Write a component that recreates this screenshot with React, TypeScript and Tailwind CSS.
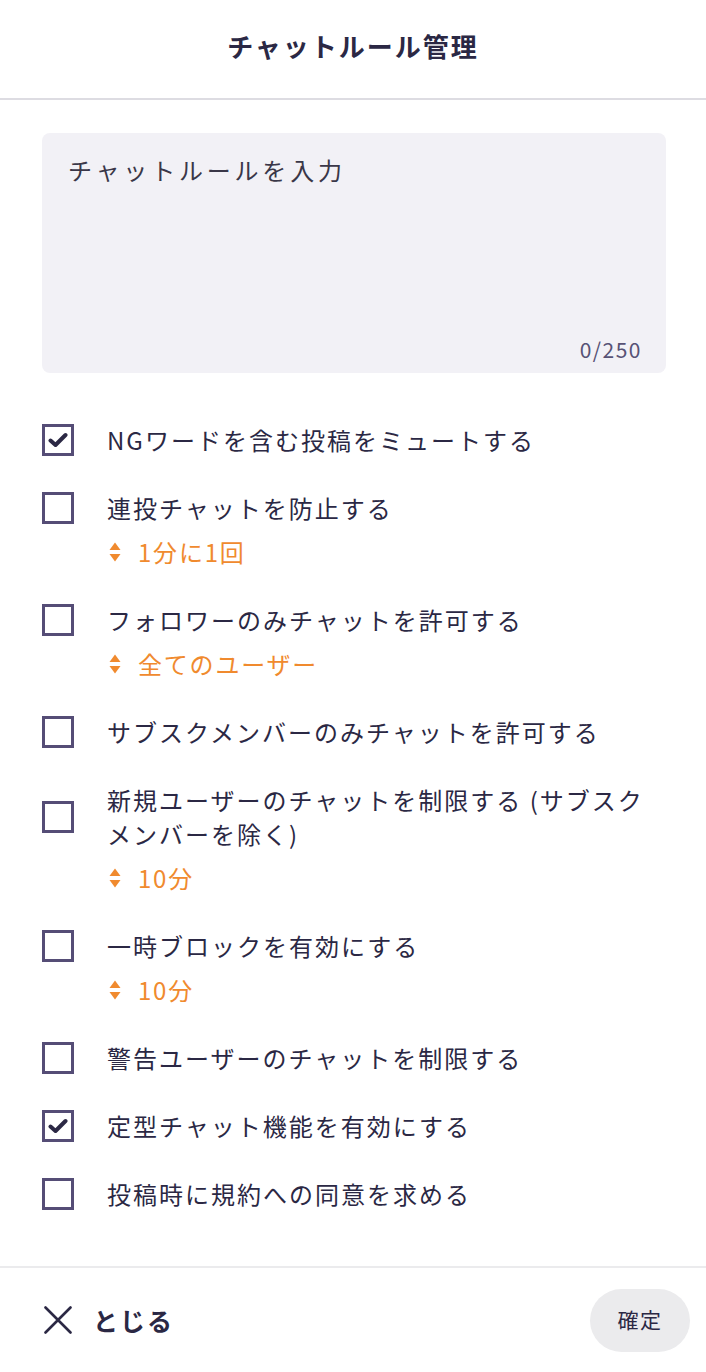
import React from "react";

const FONT = { fontFamily: '"Noto Sans CJK JP", "Noto Sans", sans-serif' };

type Item = { label: React.ReactNode; checked?: boolean; sub?: string };

const items: Item[] = [
  { label: "NGワードを含む投稿をミュートする", checked: true },
  { label: "連投チャットを防止する", sub: "1分に1回" },
  { label: "フォロワーのみチャットを許可する", sub: "全てのユーザー" },
  { label: "サブスクメンバーのみチャットを許可する" },
  { label: "新規ユーザーのチャットを制限する (サブスクメンバーを除く)", sub: "10分" },
  { label: "一時ブロックを有効にする", sub: "10分" },
  { label: "警告ユーザーのチャットを制限する" },
  { label: "定型チャット機能を有効にする", checked: true },
  { label: "投稿時に規約への同意を求める" },
];

function Checkbox({ checked }: { checked?: boolean }) {
  return (
    <div className="w-[32px] h-[32px] shrink-0 border-[3px] border-[#554d76] flex items-center justify-center bg-white">
      {checked && (
        <svg width="20" height="16" viewBox="0 0 20 16">
          <path d="M2.5 8.5 L7.5 13 L17.5 3" fill="none" stroke="#2b2844" strokeWidth="4" strokeLinecap="round" strokeLinejoin="round" />
        </svg>
      )}
    </div>
  );
}

function SortIcon() {
  return (
    <svg width="12" height="20" viewBox="0 0 12 20" className="shrink-0">
      <path d="M6 0.5 L11.5 8 L0.5 8 Z" fill="#f08a2e" />
      <path d="M6 19.5 L11.5 12 L0.5 12 Z" fill="#f08a2e" />
    </svg>
  );
}

export default function App() {
  return (
    <div className="min-h-screen w-full bg-white flex flex-col text-[#2b2844]" style={FONT}>
      <header className="h-[100px] shrink-0 border-b-2 border-[#dddce2] flex items-center justify-center pb-[6px]">
        <h1 className="text-[26px] font-bold tracking-[2px] leading-none">チャットルール管理</h1>
      </header>

      <main className="flex-1 pl-[42px] pr-[40px] pt-[33px]">
        <div className="h-[240px] rounded-[8px] bg-[#f2f1f6] flex flex-col justify-between pl-[26px] pr-[24px] pt-[20px] pb-[10px]">
          <div className="text-[24px] tracking-[3.8px] leading-[34px] text-[#3a3748]">チャットルールを入力</div>
          <div className="self-end text-[21px] tracking-[1.5px] text-[#575275] leading-[28px]">0/250</div>
        </div>

        <div className="mt-[50px] flex flex-col gap-[34px]">
          {items.map((it, i) => (
            <div key={i} className="flex flex-col">
              <div className="flex items-center gap-[33px]">
                <Checkbox checked={it.checked} />
                <div className="text-[24px] tracking-[2px] leading-[34px] text-[#2b2844]">{it.label}</div>
              </div>
              {it.sub && (
                <div className="mt-[10px] pl-[67px] flex items-center gap-[17px] text-[#f08a2e]">
                  <SortIcon />
                  <span className="text-[24px] tracking-[1.8px] leading-[34px]">{it.sub}</span>
                </div>
              )}
            </div>
          ))}
        </div>
      </main>

      <footer className="h-[106px] shrink-0 border-t-2 border-[#ebebed] flex items-center justify-between pl-[44px] pr-[16px]">
        <div className="flex items-center gap-[21px]">
          <svg width="28" height="28" viewBox="0 0 28 28">
            <path d="M1.5 1.5 L26.5 26.5 M26.5 1.5 L1.5 26.5" stroke="#2b2844" strokeWidth="2.6" strokeLinecap="round" />
          </svg>
          <span className="text-[25px] font-bold tracking-[2px] leading-none">とじる</span>
        </div>
        <button className="w-[100px] h-[63px] rounded-full bg-[#ebebed] text-[21px] tracking-[1.5px] text-[#2b2844]">確定</button>
      </footer>
    </div>
  );
}
